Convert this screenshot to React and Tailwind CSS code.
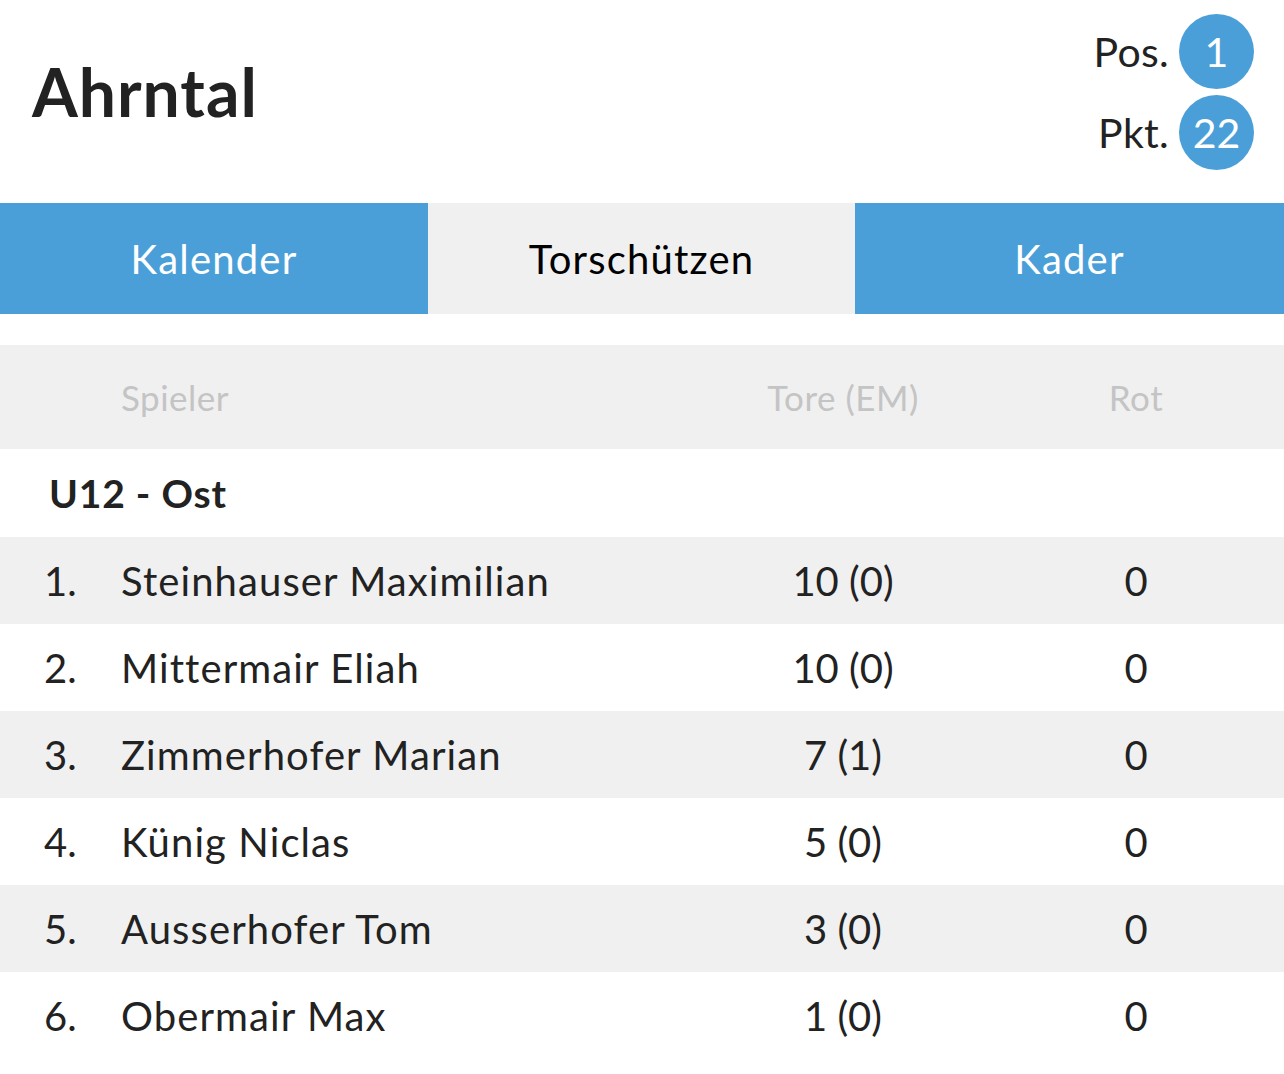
import React from "react";

const rows = [
  ["1.", "Steinhauser Maximilian", "10 (0)", "0"],
  ["2.", "Mittermair Eliah", "10 (0)", "0"],
  ["3.", "Zimmerhofer Marian", "7 (1)", "0"],
  ["4.", "Künig Niclas", "5 (0)", "0"],
  ["5.", "Ausserhofer Tom", "3 (0)", "0"],
  ["6.", "Obermair Max", "1 (0)", "0"],
];

export default function App() {
  return (
    <div className="w-[1284px] min-h-[1074px] bg-white text-[#222222]" style={{ fontFamily: "Lato, 'Noto Sans', sans-serif" }}>
      <div className="h-[203px] flex items-center justify-between pl-[32px] pr-[30px]">
        <h1 className="text-[66px] font-bold leading-none tracking-[1px] -mt-[20px]">Ahrntal</h1>
        <div className="flex flex-col items-end gap-[6px] -mt-[20px]">
          <div className="flex items-center gap-[10px]">
            <span className="text-[41px] leading-none tracking-[0.3px]">Pos.</span>
            <span className="w-[75px] h-[75px] rounded-full bg-[#4a9fd8] text-white text-[41px] leading-none flex items-center justify-center">1</span>
          </div>
          <div className="flex items-center gap-[10px]">
            <span className="text-[41px] leading-none tracking-[0.3px]">Pkt.</span>
            <span className="w-[75px] h-[75px] rounded-full bg-[#4a9fd8] text-white text-[41px] leading-none flex items-center justify-center">22</span>
          </div>
        </div>
      </div>
      <div className="grid grid-cols-[428px_427px_429px] h-[111px] text-[40px] tracking-[1.2px]">
        <div className="bg-[#4a9fd8] text-white flex items-center justify-center">Kalender</div>
        <div className="bg-[#f0f0f0] text-black flex items-center justify-center">Torschützen</div>
        <div className="bg-[#4a9fd8] text-white flex items-center justify-center">Kader</div>
      </div>
      <div className="h-[31px]" />
      <div className="grid grid-cols-[77px_577px_290px_1fr] pl-[44px] h-[104px] items-center bg-[#f0f0f0] text-[35px] tracking-[0.5px] text-[#c4c4c4]">
        <div />
        <div>Spieler</div>
        <div className="text-center">Tore (EM)</div>
        <div className="text-center">Rot</div>
      </div>
      <div className="h-[88px] flex items-center pl-[49px] text-[39px] font-bold tracking-[0.8px]">U12 - Ost</div>
      {rows.map((r, i) => (
        <div
          key={i}
          className={`grid grid-cols-[77px_577px_290px_1fr] pl-[44px] h-[87px] items-center text-[40px] ${i % 2 === 0 ? "bg-[#f0f0f0]" : "bg-white"}`}
        >
          <div>{r[0]}</div>
          <div className="tracking-[1.1px]">{r[1]}</div>
          <div className="text-center">{r[2]}</div>
          <div className="text-center">{r[3]}</div>
        </div>
      ))}
    </div>
  );
}
